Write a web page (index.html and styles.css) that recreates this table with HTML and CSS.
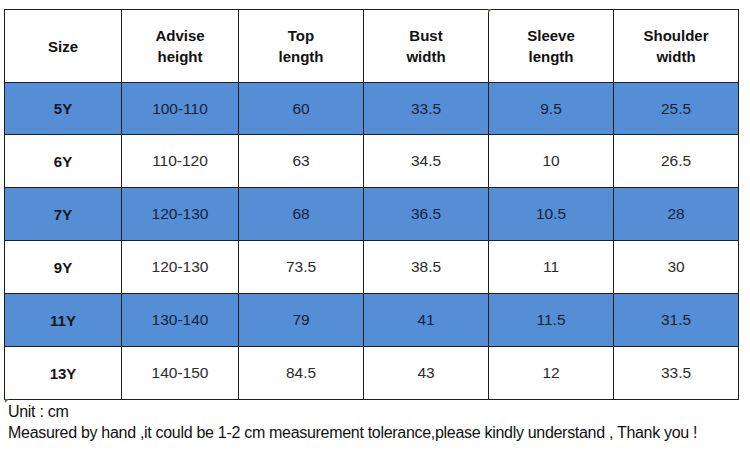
FILE: index.html
```html
<!DOCTYPE html>
<html>
<head>
<meta charset="utf-8">
<link rel="stylesheet" href="styles.css">
</head>
<body>
<div class="wrap">
  <table class="size-table">
    <colgroup>
      <col class="c1"><col class="c2"><col class="c3"><col class="c4"><col class="c5"><col class="c6">
    </colgroup>
    <thead>
      <tr class="head">
        <th>Size</th>
        <th>Advise<br>height</th>
        <th>Top<br>length</th>
        <th>Bust<br>width</th>
        <th>Sleeve<br>length</th>
        <th>Shoulder<br>width</th>
      </tr>
    </thead>
    <tbody>
      <tr class="blue first"><td class="sz">5Y</td><td>100-110</td><td>60</td><td>33.5</td><td>9.5</td><td>25.5</td></tr>
      <tr class="white"><td class="sz">6Y</td><td>110-120</td><td>63</td><td>34.5</td><td>10</td><td>26.5</td></tr>
      <tr class="blue"><td class="sz">7Y</td><td>120-130</td><td>68</td><td>36.5</td><td>10.5</td><td>28</td></tr>
      <tr class="white"><td class="sz">9Y</td><td>120-130</td><td>73.5</td><td>38.5</td><td>11</td><td>30</td></tr>
      <tr class="blue"><td class="sz">11Y</td><td>130-140</td><td>79</td><td>41</td><td>11.5</td><td>31.5</td></tr>
      <tr class="white"><td class="sz">13Y</td><td>140-150</td><td>84.5</td><td>43</td><td>12</td><td>33.5</td></tr>
    </tbody>
  </table>
  <span class="mark mark-top"></span>
  <span class="mark mark-bottom"></span>
  <div class="notes">
    <p>Unit : cm</p>
    <p>Measured by hand ,it could be 1-2 cm measurement tolerance,please kindly understand , Thank you !</p>
  </div>
</div>
</body>
</html>
```

FILE: styles.css
```css
html, body {
  margin: 0;
  padding: 0;
  background: #ffffff;
}
body {
  font-family: "Liberation Sans", Arial, sans-serif;
  color: #111;
}
.wrap {
  position: relative;
  padding: 9px 0 0 4px;
}
.size-table {
  border-collapse: collapse;
  table-layout: fixed;
  width: 734px;
}
.c1 { width: 117px; }
.c2 { width: 117px; }
.c3 { width: 125px; }
.c4 { width: 125px; }
.c5 { width: 125px; }
.c6 { width: 125px; }
.size-table th,
.size-table td {
  border: 1px solid #1e1e1e;
  text-align: center;
  vertical-align: middle;
  padding: 0;
}
.size-table th {
  font-weight: bold;
  font-size: 15px;
  line-height: 21px;
  color: #111;
}
.head { height: 73px; }
.size-table tbody tr { height: 53px; }
.size-table tbody tr.first { height: 52px; }
.size-table td {
  font-size: 15.5px;
  color: #2b2b2b;
}
.size-table td.sz {
  font-weight: bold;
  font-size: 15px;
  color: #141414;
}
.blue td {
  background: #558ed5;
  color: #14243e;
}
.blue td.sz { color: #0f1726; }
.mark {
  position: absolute;
  width: 0;
  height: 0;
}
.mark-top {
  left: 488px;
  top: 9px;
  border-top: 4px solid #3a8a2e;
  border-right: 4px solid transparent;
}
.mark-bottom {
  left: 5px;
  top: 399px;
  border-top: 4px solid #3a8a2e;
  border-right: 4px solid transparent;
}
.notes {
  padding: 1px 0 0 4px;
}
.notes p {
  margin: 0;
  font-size: 16px;
  line-height: 21px;
  letter-spacing: -0.3px;
  color: #111;
}
```
